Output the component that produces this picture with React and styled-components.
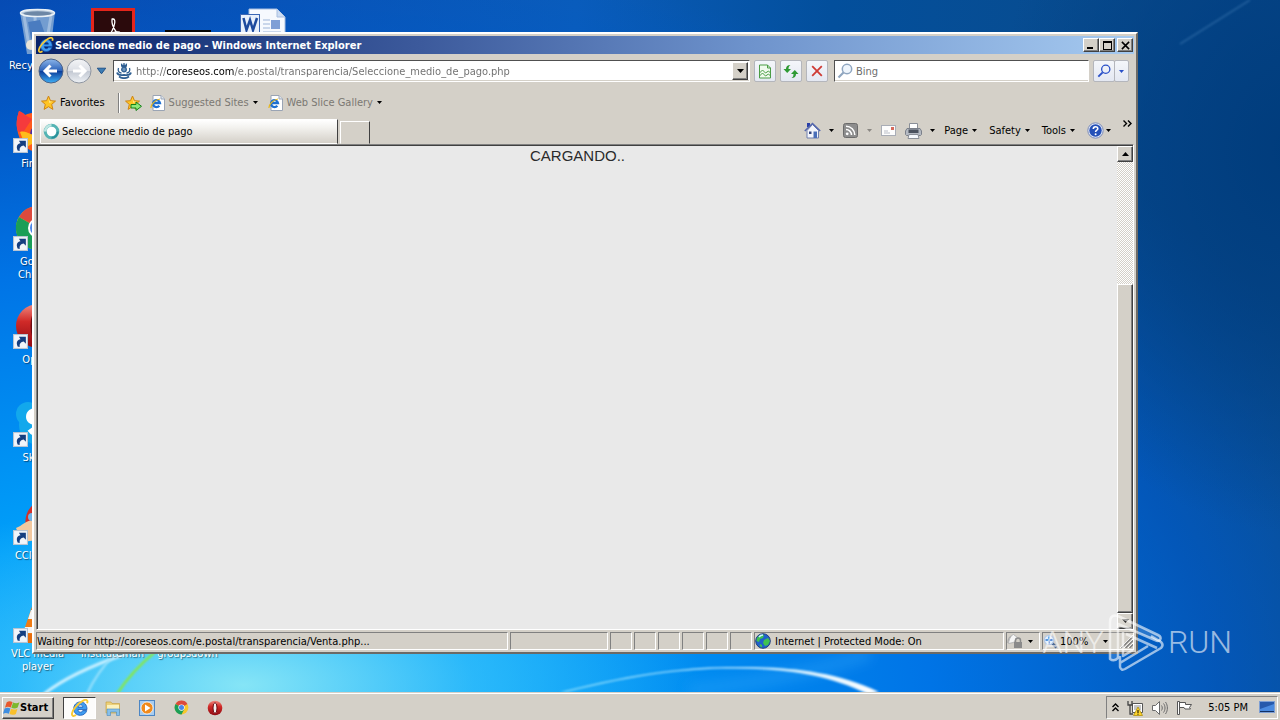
import React from 'react'
import styled, { createGlobalStyle, css } from 'styled-components'

const GlobalStyle = createGlobalStyle`
  * { box-sizing: border-box; }
  body {
    margin: 0;
    font-family: "DejaVu Sans Condensed", "DejaVu Sans", Tahoma, sans-serif;
    font-size: 11px;
    line-height: 13px;
    color: #000;
  }
  button, input {
    font: inherit;
    color: inherit;
    margin: 0;
    padding: 0;
    border: 0;
    background: none;
    border-radius: 0;
  }
  svg { display: block; flex: none; }
`

const face = '#d4d0c8'

const raised = css`
  border: 1px solid;
  border-color: #fff #404040 #404040 #fff;
  box-shadow: inset -1px -1px 0 #808080;
  background: ${face};
`

const sunken = css`
  border: 1px solid;
  border-color: #808080 #fff #fff #808080;
`

const Screen = styled.div`
  display: flex;
  flex-direction: column;
  height: 100vh;
  overflow: hidden;
`

/* ---------- desktop ---------- */

const Desktop = styled.main`
  position: relative;
  flex: 1;
  min-height: 0;
  overflow: hidden;
  background:
    radial-gradient(ellipse 460px 190px at 19% 99%, rgba(140, 232, 246, .95), rgba(70, 200, 250, .6) 50%, transparent 100%),
    radial-gradient(ellipse 300px 380px at 101% 22%, #003c7c, rgba(0, 62, 130, .7) 45%, transparent 100%),
    radial-gradient(ellipse 1300px 780px at 14% 104%, #10acff, #00a0fa 25%, #0074e6 58%, rgba(0, 92, 204, .7) 80%, transparent 100%),
    linear-gradient(90deg, #0846ac, #0a5cba 45%, #034f9c 65%, #0c4a86);
`

const Wallpaper = styled.svg`
  position: absolute;
  inset: 0;
  width: 100%;
  height: 100%;
`

const IconGrid = styled.div`
  position: relative;
  display: grid;
  grid-template-columns: repeat(4, 75px);
  grid-template-rows: repeat(7, 98px);
`

const Shortcut = styled.div`
  grid-column: ${({ $col }) => $col};
  grid-row: ${({ $row }) => $row};
  position: relative;
  display: flex;
  flex-direction: column;
  align-items: center;
  padding-top: 8px;
  gap: 3px;
  color: #fff;
  text-align: center;
  text-shadow: 1px 1px 1px rgba(0, 0, 0, .5);
`

const Label = styled.span`
  width: 66px;
`

const Arrow = styled.svg`
  position: absolute;
  left: 13px;
  top: 40px;
`

/* ---------- window ---------- */

const Window = styled.section`
  position: absolute;
  top: 32px;
  left: 32px;
  right: 142px;
  bottom: 38px;
  display: flex;
  flex-direction: column;
  padding: 2px;
  border: 2px solid;
  border-color: #fff #6c6a66 #6c6a66 #fff;
  background: ${face};
`

const TitleBar = styled.header`
  display: flex;
  align-items: center;
  height: 18px;
  flex: none;
  padding: 0 1px 0 2px;
  gap: 1px;
  color: #fff;
  font-weight: bold;
  background: linear-gradient(90deg, #0a246a, #3c5a9c 35%, #6e93cc 65%, #a6caf0);
`

const Title = styled.h1`
  flex: 1;
  margin: 0;
  font-size: 11px;
`

const WinButton = styled.button`
  ${raised}
  display: flex;
  align-items: center;
  justify-content: center;
  width: 16px;
  height: 14px;
  margin-left: ${({ $apart }) => ($apart ? 1 : -1)}px;
`

const AddressRow = styled.div`
  display: flex;
  align-items: center;
  flex: none;
  height: 34px;
  padding: 0 5px 0 2px;
  gap: 4px;
`

const NavGroup = styled.div`
  display: flex;
  align-items: center;
  gap: 2px;
`

const IconButton = styled.button`
  display: flex;
  align-items: center;
  justify-content: center;
  gap: ${({ $gap }) => $gap || 0}px;
  margin-right: ${({ $text }) => ($text ? 3 : 0)}px;
`

const Field = styled.label`
  display: flex;
  align-items: center;
  height: 22px;
  border: 1px solid;
  border-color: #505050 #fff #fff #505050;
  box-shadow: inset 0 -1px 0 ${face};
  background: #fff;
  padding: 0 1px 0 2px;
  gap: 4px;
`

const AddressField = styled(Field)`
  flex: 1;
  min-width: 0;
`

const SearchField = styled(Field)`
  width: 255px;
  margin-left: 2px;
  gap: 3px;
`

const TextInput = styled.input`
  flex: 1;
  min-width: 0;
  outline: 0;
  color: #6d6d6d;
  &::placeholder { color: #6d6d6d; opacity: 1; }
`

/* the host name is darker than the rest of the address */
const UrlInput = styled(TextInput)`
  color: transparent;
  background: linear-gradient(90deg, #6d6d6d 31px, #000 31px, #000 98px, #6d6d6d 98px);
  background-clip: text;
  -webkit-background-clip: text;
`

const DropButton = styled.button`
  ${raised}
  display: flex;
  align-items: center;
  justify-content: center;
  width: 16px;
  height: 18px;
`

const ToolButton = styled.button`
  display: flex;
  align-items: center;
  justify-content: center;
  width: 22px;
  height: 22px;
  border: 1px solid #b4b6bc;
  border-radius: 2px;
  background: linear-gradient(#f4f6fa, #e4e8f2);
`

const SearchSplit = styled.div`
  display: flex;
  button + button { width: 15px; margin-left: -1px; }
`

const FavoritesRow = styled.nav`
  display: flex;
  align-items: center;
  flex: none;
  height: 29px;
  padding-left: 5px;
`

const FavButton = styled.button`
  display: flex;
  align-items: center;
  gap: 4px;
  margin-right: ${({ $end }) => $end || 8}px;
  color: ${({ $muted }) => ($muted ? '#7b7873' : '#000')};
`

const Divider = styled.span`
  width: 2px;
  height: 20px;
  margin-right: 5px;
  border-left: 1px solid #808080;
  border-right: 1px solid #fff;
`

const TabRow = styled.div`
  display: flex;
  align-items: flex-end;
  flex: none;
  height: 27px;
  padding: 0 2px 0 4px;
`

const Tab = styled.button`
  display: flex;
  align-items: center;
  gap: 2px;
  width: 298px;
  height: 25px;
  padding-left: 2px;
  border: 1px solid;
  border-color: #fff #404040 transparent #fff;
  background: linear-gradient(#fff, #f4f3f0 30%, ${face});
`

const NewTab = styled.button`
  width: 30px;
  height: 23px;
  margin-left: 2px;
  border: 1px solid;
  border-color: #fff #404040 transparent #fff;
`

const CommandBar = styled.div`
  display: flex;
  align-items: center;
  gap: 9px;
  height: 27px;
  margin-left: auto;
`

const More = styled.button`
  align-self: flex-start;
  padding: 3px 0 0 3px;
`

const Content = styled.div`
  display: flex;
  flex: 1;
  min-height: 0;
  border: 1px solid;
  border-color: #808080 #fff #fff #808080;
`

const Page = styled.article`
  flex: 1;
  padding-top: 1px;
  border-top: 1px solid #404040;
  border-left: 1px solid #404040;
  background: #e9e9e9;
  color: #2b2b2b;
  font-family: "Liberation Sans", Arial, sans-serif;
  font-size: 15px;
  line-height: 18px;
  text-align: center;
`

const ScrollBar = styled.div`
  display: flex;
  flex-direction: column;
  width: 16px;
  border-top: 1px solid #404040;
  background: repeating-conic-gradient(#fff 0 25%, ${face} 0 50%) 0 0 / 2px 2px;
`

const ScrollButton = styled(DropButton)`
  height: 16px;
  flex: none;
`

const Track = styled.div`
  flex: 1;
  display: flex;
  flex-direction: column;
  justify-content: flex-end;
`

const Thumb = styled.div`
  ${raised}
  height: 73%;
`

const StatusBar = styled.footer`
  display: flex;
  flex: none;
  gap: 2px;
  height: 20px;
  padding-top: 2px;
`

const Panel = styled.div`
  ${sunken}
  display: flex;
  align-items: center;
  gap: ${({ $gap }) => $gap || 4}px;
  width: ${({ $w }) => ($w ? `${$w}px` : 'auto')};
  flex: ${({ $w }) => ($w ? 'none' : 1)};
  white-space: nowrap;
`

const ZoomPanel = styled(Panel)`
  > span { margin-right: auto; }
  > svg:last-child { margin-left: 10px; }
`

/* ---------- taskbar ---------- */

const TaskBar = styled.footer`
  display: flex;
  align-items: center;
  flex: none;
  height: 28px;
  padding: 2px 2px 0;
  border-top: 1px solid ${face};
  box-shadow: inset 0 1px 0 #fff;
  background: ${face};
`

const StartButton = styled.button`
  ${raised}
  display: flex;
  align-items: center;
  width: 52px;
  height: 22px;
  font-weight: bold;
`

const TaskButton = styled.button`
  display: flex;
  align-items: center;
  justify-content: center;
  width: 34px;
  height: 22px;
  ${({ $active }) => $active && css`
    width: 33px;
    border: 1px solid;
    border-color: #404040 #fff #fff #404040;
    background: #fcfcfb;
    margin: 0 0 0 9px;
  `}
`

const Tray = styled.div`
  ${sunken}
  display: flex;
  align-items: center;
  gap: 8px;
  height: 23px;
  margin-left: auto;
  padding: 0 2px 0 5px;
`

const Clock = styled.time`
  margin: 0 3px 0 8px;
`

/* ---------- watermark ---------- */

const Watermark = styled.div`
  position: absolute;
  right: 48px;
  bottom: 48px;
  display: flex;
  align-items: center;
  gap: 4px;
  color: rgba(255, 255, 255, .6);
  font-family: Roboto, sans-serif;
  font-size: 32px;
  font-weight: 300;
  line-height: 60px;
  pointer-events: none;
`

/* ---------- drawings ---------- */

const Caret = ({ color = '#000', w = 5 }) => (
  <svg width={w} height={(w + 1) / 2} viewBox="0 0 10 6" preserveAspectRatio="none">
    <path d="M0 0h10L5 6z" fill={color} />
  </svg>
)

const IeIcon = ({ size = 16 }) => (
  <svg width={size} height={size} viewBox="0 0 16 16">
    <path d="M14 10.300c-.8 2.500-2.900 4.200-5.700 4.200C4.800 14.500 2.400 12.100 2.400 8.700S4.900 2.600 8.400 2.600c3.600 0 5.900 2.600 5.800 6.800H6.200c.1 1.500 1 2.300 2.300 2.300.9 0 1.500-.4 1.900-1.400zM6.300 7.200h4.200c0-1.200-.8-2-2-2s-2 .8-2.200 2z" fill="#3f9cf0" stroke="#0f55b4" strokeWidth=".7" />
    <path d="M4.500 14.200c-2.300 1.500-4 1-3.600-1.500C1.500 9.300 6.200 3.900 10.500 1.600c2.800-1.500 5-1 3.800 2.200" fill="none" stroke="#f8ca34" strokeWidth="1.700" />
  </svg>
)

const PageIe = () => (
  <svg width="15" height="16" viewBox="0 0 15 16">
    <path d="M3 .5h8l3.500 3.500v11.500H3z" fill="#fff" stroke="#9aa4b4" />
    <path d="M11 .5V4h3.500" fill="#dfe6f0" stroke="#9aa4b4" />
    <path d="M9.300 10.800a3.500 3.500 0 1 1 .7-2.600H3.500" fill="none" stroke="#1e6fd0" strokeWidth="2.300" />
    <path d="M1 13C.5 10 5 4.500 10 4" fill="none" stroke="#e8b820" strokeWidth="1.200" />
  </svg>
)

const Star = ({ add }) => (
  <svg width={add ? 17 : 15} height="16" viewBox={add ? '0 0 17 16' : '0 0 15 16'}>
    <path d="M7.500 1l2 4.700 5 .4-3.800 3.300 1.200 5-4.400-2.700-4.400 2.700 1.200-5L.5 6.100l5-.4z" fill="#ffc524" stroke="#cf8514" />
    <path d="M7.500 3l1.200 3.400 3 .3-3.500 1z" fill="#fff0a0" />
    {add && <path d="M6 9.500h5V7l5.500 4.300L11 15.500V13H6z" fill="#8fe878" stroke="#15801b" />}
  </svg>
)

const Spinner = () => (
  <svg width="17" height="17" viewBox="0 0 17 17">
    <circle cx="8.500" cy="8.500" r="6.300" fill="#fff" stroke="#55b4b4" strokeWidth="3" />
    <path d="M2.200 8.500a6.300 6.300 0 0 1 6.300-6.300" fill="none" stroke="#bfe6e2" strokeWidth="2.500" />
    <path d="M14.800 8.500a6.300 6.300 0 0 1-6.300 6.300" fill="none" stroke="#2a8f9a" strokeWidth="2" />
  </svg>
)

const Round = ({ back }) => (
  <svg width="26" height="26" viewBox="0 0 26 26">
    <defs>
      <linearGradient id={back ? 'rb' : 'rf'} x1="0" y1="0" x2="0" y2="1">
        <stop offset="0" stopColor={back ? '#8db6ea' : '#f4f5f7'} />
        <stop offset=".48" stopColor={back ? '#2d63ba' : '#dcdfe5'} />
        <stop offset=".52" stopColor={back ? '#0c3f9c' : '#c3c9d3'} />
        <stop offset="1" stopColor={back ? '#3fb0f6' : '#eef1f5'} />
      </linearGradient>
    </defs>
    <circle cx="13" cy="13" r="12" fill={`url(#${back ? 'rb' : 'rf'})`} stroke={back ? '#4b6288' : '#8f96a1'} />
    <path
      d="M7 13h12M12.500 7.500L7 13l5.500 5.500"
      transform={back ? undefined : 'rotate(180 13 13)'}
      fill="none" stroke="#fff" strokeWidth="3"
    />
  </svg>
)

const Crest = () => (
  <svg width="16" height="16" viewBox="0 0 16 16" fill="none" stroke="#2f5f92" strokeWidth="1.300">
    <path d="M5 2.500h6M5.500.7L6 3.500h4l.5-2.800M8 0v2" />
    <circle cx="8" cy="6.500" r="2.300" fill="#6f97bd" />
    <path d="M2.500 5c-1 3 .5 5 3 5M13.500 5c1 3-.5 5-3 5" />
    <path d="M1 9.500c1 3.500 4 2.500 7 2.500s6 1 7-2.500M3 13.500c3 2 7 2 10 0" strokeWidth="1.800" />
  </svg>
)

const Magnifier = ({ color = '#8fa6c0', size = 16, fill = '#eef5fc' }) => (
  <svg width={size} height={size} viewBox="0 0 16 16">
    <circle cx="10" cy="6" r="4.700" fill={fill} stroke={color} strokeWidth="1.500" />
    <path d="M6.500 9.500L1.500 14.500" stroke={color} strokeWidth="2.200" />
  </svg>
)

const Broken = () => (
  <svg width="14" height="15" viewBox="0 0 14 15">
    <path d="M1.500 1h8l3 3v10h-11z" fill="#f0faee" stroke="#4b9d45" />
    <path d="M9.500 1v3h3M1.500 9l3-3 3 3 3-2 2 2M1.500 12l3-3 3 3 3-2 2 2" fill="none" stroke="#4b9d45" />
  </svg>
)

const Refresh = () => (
  <svg width="16" height="15" viewBox="0 0 16 15">
    <path d="M7.500 1C4.500 1 3 2.500 3 5H.5L4.200 9 8 5H5.500C5.500 3 6 2 7.500 1z" fill="#2e9a34" />
    <path d="M8.500 14c3 0 4.500-1.500 4.500-4h2.500L11.800 6 8 10h2.500c0 2-.5 3-2 4z" fill="#2e9a34" />
  </svg>
)

const Cross = ({ color, size, width }) => (
  <svg width={size} height={size} viewBox="0 0 10 10">
    <path d="M1 1l8 8M9 1l-8 8" stroke={color} strokeWidth={width} />
  </svg>
)

const House = () => (
  <svg width="17" height="17" viewBox="0 0 17 17">
    <path d="M3 1h3v4H3z" fill="#2a3fa8" />
    <path d="M3 8.500v7.500h11.500V8.500L8.500 2.500z" fill="#f3f5fb" stroke="#6f7fae" />
    <path d="M.8 9L8.500 1.500 16.200 9" fill="none" stroke="#5668ae" strokeWidth="1.600" />
    <path d="M9.500 9.500h3.500V16H9.500z" fill="#4a6eb8" />
    <path d="M5 9.500h2.500V12H5z" fill="#34457f" />
  </svg>
)

const Rss = () => (
  <svg width="15" height="15" viewBox="0 0 15 15">
    <rect x=".5" y=".5" width="14" height="14" rx="2" fill="#8d8d8d" stroke="#6c6c6c" />
    <circle cx="4.200" cy="10.800" r="1.400" fill="#fff" />
    <path d="M3 6.500a5.500 5.500 0 0 1 5.500 5.500M3 3.200A8.800 8.800 0 0 1 11.800 12" fill="none" stroke="#fff" strokeWidth="1.500" />
  </svg>
)

const Mail = () => (
  <svg width="15" height="12" viewBox="0 0 15 12">
    <rect x=".5" y=".5" width="14" height="10" fill="#fdfdfd" stroke="#a9adb6" />
    <path d="M3 8h6M3 6h4" stroke="#b9bdc6" />
    <rect x="10" y="2" width="3" height="3" fill="#d66a5c" />
  </svg>
)

const Printer = () => (
  <svg width="17" height="16" viewBox="0 0 17 16">
    <path d="M4.500.5h8V6h-8z" fill="#fff" stroke="#8a8f98" />
    <path d="M2 5.500h13l1.500 2.500v3.500l-1 1h-14l-1-1V8z" fill="#b4b9c2" stroke="#7b808a" />
    <path d="M3.500 6.500h10v3.500h-10z" fill="#4a515e" />
    <path d="M4 11.500h9l1 4H3z" fill="#f5f8fd" stroke="#8a8f98" />
  </svg>
)

const Help = () => (
  <svg width="17" height="17" viewBox="0 0 17 17">
    <circle cx="8.500" cy="8.500" r="7.700" fill="#dfe6f6" stroke="#7d8cb8" />
    <circle cx="8.500" cy="8.500" r="6.200" fill="#2450b8" />
    <path d="M6.300 7c0-3 4.500-3 4.500-.3 0 1.500-2.200 1.600-2.200 3.300" fill="none" stroke="#fff" strokeWidth="1.600" />
    <circle cx="8.600" cy="12.300" r="1" fill="#fff" />
  </svg>
)

const Globe = () => (
  <svg width="16" height="16" viewBox="0 0 16 16">
    <circle cx="8" cy="8" r="7.300" fill="#1f62cc" stroke="#23407c" />
    <path d="M2 5c2-3 5-4 7-3L8 5 5 6 4 9 1.500 8zM9 7l4-2 2 3-2 4-3 1-2-3zM5 11l2 1v2.500L4.500 13z" fill="#3fc250" />
    <path d="M4 4c1-1.500 3-2 4-2" stroke="#c9f2ff" fill="none" strokeWidth="1.500" />
  </svg>
)

const LockShield = () => (
  <svg width="16" height="16" viewBox="0 0 16 16">
    <path d="M1 10c0-4 2-7 5-7l4 2" fill="none" stroke="#a9a9a9" strokeWidth="1.500" />
    <path d="M1.500 10.500C2 5 5 1.500 6.500 1.500l4 3-4 5z" fill="#f5f5f5" stroke="#b4b4b4" />
    <path d="M8.500 9V7.500a2.500 2.500 0 0 1 5 0V9" fill="none" stroke="#8b8b8b" strokeWidth="1.500" />
    <rect x="7" y="9" width="8" height="6" fill="#8b8b8b" />
  </svg>
)

const ZoomIcon = () => (
  <svg width="15" height="15" viewBox="0 0 15 15">
    <path d="M8.500 8.500l5 5" stroke="#4e6a94" strokeWidth="2.500" />
    <circle cx="6" cy="6" r="4.700" fill="#e4f0fd" stroke="#b4c8e4" strokeWidth="1.200" />
    <path d="M2.500 6h7M6 2.500v7" stroke="#5a94dc" strokeWidth="1.800" />
  </svg>
)

const Grip = () => (
  <svg width="13" height="13" viewBox="0 0 13 13" fill="none">
    <path d="M0 13L13 0M4 13l9-9M8 13l5-5" stroke="#fff" />
    <path d="M1.500 13L13 1.500M5.500 13L13 5.500M9.500 13L13 9.500" stroke="#808080" strokeWidth="1.500" />
  </svg>
)

const Flag = () => (
  <svg width="17" height="18" viewBox="0 0 16 16">
    <path d="M3.500 2.500c2-1.500 4-1 5.500 0L7.300 7.500C5.500 6.500 3.500 6.500 1.800 7.700z" fill="#e8582c" />
    <path d="M9.500 2.800c2 1 4 1 6-.3L13.800 7.500c-2 1.300-4 1.200-6 .2z" fill="#7db82c" />
    <path d="M1.500 8.500c2-1.200 3.800-1 5.500 0l-1.500 5c-2-1-3.700-1-5.500 0z" fill="#3f8ee0" />
    <path d="M7.600 8.800c2 1 4 1 6-.2l-1.500 5c-2 1.200-4 1-6 .1z" fill="#f8c02c" />
  </svg>
)

const Folder = () => (
  <svg width="16" height="16" viewBox="0 0 16 16">
    <path d="M1 2h5l1 1.500h7.500V13H1z" fill="#ecd07a" stroke="#c49b34" strokeWidth=".6" />
    <path d="M2 5h12v5H2z" fill="#fbf1bc" />
    <path d="M2 15.500V9h12.500v6.500h-3v-3.500h-6v3.500z" fill="#86c0ea" stroke="#4a88bc" strokeWidth=".6" />
  </svg>
)

const MediaPlayer = () => (
  <svg width="16" height="16" viewBox="0 0 16 16">
    <rect x=".5" y=".5" width="15" height="15" fill="#a8cdf0" stroke="#4c86c4" />
    <circle cx="8" cy="8" r="6" fill="#f08a1c" stroke="#fff" strokeWidth=".7" />
    <path d="M6 4.500v7L11.500 8z" fill="#fff" />
  </svg>
)

const ChromeIcon = ({ size }) => (
  <svg width={size} height={size} viewBox="0 0 48 48">
    <circle cx="24" cy="24" r="22" fill="#f7c72c" />
    <path d="M24 24L4.900 13A22 22 0 0 1 43.100 13z" fill="#dc4a3d" />
    <path d="M24 24L4.900 13A22 22 0 0 0 24 46l9-17z" fill="#1a9e57" />
    <circle cx="24" cy="24" r="10" fill="#fff" />
    <circle cx="24" cy="24" r="8" fill="#4a86e8" />
  </svg>
)

const OperaIcon = ({ size }) => (
  <svg width={size} height={size} viewBox="0 0 48 48">
    <defs>
      <linearGradient id="opera" x1="0" y1="0" x2="0" y2="1">
        <stop offset="0" stopColor="#f08a80" />
        <stop offset=".4" stopColor="#d02a28" />
        <stop offset="1" stopColor="#8e0a12" />
      </linearGradient>
    </defs>
    <circle cx="24" cy="24" r="22" fill="url(#opera)" />
    <ellipse cx="24" cy="24" rx="6" ry="16" fill="#f4f0f0" stroke="#6c0a10" strokeWidth="3" />
  </svg>
)

const NetworkIcon = () => (
  <svg width="16" height="16" viewBox="0 0 16 16">
    <path d="M5.500 3.500h10v9h-10z" fill="#fff" stroke="#555" />
    <path d="M7 5h7v5H7z" fill="#c5c5c5" />
    <path d="M1 1v4h4V1M3 5v9h3" fill="none" stroke="#444" strokeWidth="1.300" />
    <path d="M11 7l4.500 8.500h-9z" fill="#ffd42a" stroke="#a88800" strokeWidth=".7" />
    <path d="M11 10v3M11 13.700v1" stroke="#000" />
  </svg>
)

const Speaker = () => (
  <svg width="17" height="16" viewBox="0 0 17 16" fill="none" stroke="#6a6a6a">
    <path d="M1.500 5.500h3l4-4v13l-4-4h-3z" fill="#fff" />
    <path d="M10.500 5.500c1 1.500 1 3.500 0 5M12.500 3.500c2 2.500 2 6.500 0 9M14.500 2c2.500 3.500 2.500 8.500 0 12" />
  </svg>
)

const ActionFlag = () => (
  <svg width="16" height="16" viewBox="0 0 16 16" fill="#fff" stroke="#555">
    <path d="M3.500 2.500h6v2h6l-2 3 1 1.500H9l-1-1.500H3.500z" />
    <path d="M1.500 1.500h2v13h-2z" />
  </svg>
)

const Display = () => (
  <svg width="16" height="13" viewBox="0 0 16 13">
    <rect x=".5" y=".5" width="15" height="11" fill="#2659ac" stroke="#7e9fd4" />
    <path d="M1 8L15 3v8H1z" fill="#4a8ae0" />
    <path d="M1 10.500h14" stroke="#123064" />
  </svg>
)

const RecycleBin = () => (
  <svg width="48" height="48" viewBox="0 0 48 48">
    <path d="M6 4h35l-5 42H13z" fill="#8fb0d6" fillOpacity=".8" />
    <path d="M10 8l5 30M37 8l-5 30M21 8l1 30" stroke="#dfeaf5" strokeOpacity=".4" strokeWidth="3" />
    <path d="M14 14l12-2 5 14-14 5z" fill="#4a7cc0" />
    <ellipse cx="23.500" cy="5" rx="17" ry="3.500" fill="#b7c8da" stroke="#e9f0f6" strokeWidth="1.500" />
    <ellipse cx="23.500" cy="5.500" rx="14" ry="2.200" fill="#6d87a6" />
    <circle cx="17" cy="37" r="5" fill="#e8e4d8" />
  </svg>
)

const Acrobat = () => (
  <svg width="48" height="48" viewBox="0 0 48 48">
    <rect x="3.500" y="1.500" width="41" height="45" fill="#2b0a0c" stroke="#e5251b" strokeWidth="3" />
    <path d="M24 11c3 0 2 6-1 12-2 4-6 8-7 6s6-4 11-5 6 3 3 2-7-8-7-12 0-3 1-3z" fill="none" stroke="#fff" strokeWidth="1.300" />
  </svg>
)

const BlackFile = () => (
  <svg width="48" height="48" viewBox="0 0 48 48">
    <rect x="1" y="22" width="46" height="26" fill="#050505" />
  </svg>
)

const WordDoc = () => (
  <svg width="48" height="48" viewBox="0 0 48 48">
    <path d="M10 1h28l8 8v39H10z" fill="#f6f9fe" stroke="#a8bedf" />
    <path d="M38 1v8h8" fill="#cddcf2" stroke="#a8bedf" />
    <path d="M24 12h7M24 16h7M24 20h7M24 24h18" stroke="#9db4d8" />
    <rect x="32" y="12" width="9" height="9" fill="#7f9fd6" />
    <rect x="1.500" y="6.500" width="19" height="20" fill="#e7effb" stroke="#3a66b4" />
    <path d="M4.500 10l3 12 3.500-10 3 10 4-12" fill="none" stroke="#1d4a9e" strokeWidth="2.500" />
  </svg>
)

const Firefox = () => (
  <svg width="48" height="48" viewBox="0 0 48 48">
    <path d="M3 22C2 14 4 9 5 5c3 1 5 3 6 4 5-2 12-4 21-1 8 3 13 10 12 19-1 11-9 19-20 19S5 37 3 22z" fill="#ff5a1c" />
    <path d="M3 22C2 14 4 9 5 5c3 1 5 3 6 4l7 4-8 12c-4 2-7 1-7-3z" fill="#f53a3c" />
    <circle cx="26" cy="28" r="10" fill="#4a2c9c" />
    <path d="M6 26c6-2 12 4 18 4-2 8-8 8-12 12z" fill="#ffbc1c" />
  </svg>
)

const Skype = () => (
  <svg width="48" height="48" viewBox="0 0 48 48">
    <circle cx="25" cy="25" r="20" fill="#12a8ec" />
    <circle cx="14" cy="14" r="12" fill="#12a8ec" />
    <path d="M33 14c-5-5-18-5-18 3s19 5 19 12-13 7-18 0" fill="none" stroke="#fff" strokeWidth="6" />
  </svg>
)

const CCleaner = () => (
  <svg width="48" height="48" viewBox="0 0 48 48">
    <path d="M42 12A15 17 0 1 0 42 36" fill="none" stroke="#d4302a" strokeWidth="10" />
    <path d="M2 30c6-2 10-8 18-8l4 20-16 2z" fill="#f3c9a0" />
    <circle cx="18" cy="19" r="4" fill="#6fb4e8" />
  </svg>
)

const Vlc = () => (
  <svg width="48" height="48" viewBox="0 0 48 48">
    <path d="M21 2h6l13 38H8z" fill="#f07c14" />
    <path d="M17 14h14l3 9H14zM11 31h26l2 6H9z" fill="#f4f4f4" />
    <path d="M10 38h28l6 9H4z" fill="#e66c0c" />
  </svg>
)

const ShortcutArrow = () => (
  <Arrow width="15" height="15" viewBox="0 0 14 14">
    <rect x=".5" y=".5" width="13" height="13" fill="#f1f5fa" stroke="#b8c4d2" />
    <path d="M4.500 12C2.500 8 4 5.500 7 5L5.500 2.500H12V9L10 7C7.500 7.500 5.500 9 6.500 12z" fill="#153e80" />
  </Arrow>
)

const Backdrop = () => (
  <Wallpaper viewBox="0 0 1280 692" preserveAspectRatio="none" aria-hidden="true">
    <defs>
      <filter id="soft"><feGaussianBlur stdDeviation=".8" /></filter>
      <filter id="haze"><feGaussianBlur stdDeviation="7" /></filter>
      <linearGradient id="arc" x1="560" x2="880" y1="0" y2="0" gradientUnits="userSpaceOnUse">
        <stop offset="0" stopColor="#7fd8fc" />
        <stop offset=".6" stopColor="#bfe8ff" />
        <stop offset="1" stopColor="#fff" />
      </linearGradient>
    </defs>
    <path d="M690 690q100-10 180-36" stroke="#3eaefc" strokeWidth="8" opacity=".5" fill="none" filter="url(#haze)" />
    <path d="M560 692C640 672 690 667 735 667s96 2 144 25l-11 2c-45-22-90-25-133-25.500s-95 5-168 23.500z" fill="url(#arc)" filter="url(#soft)" />
    <path d="M44 694q28-22 82-40" stroke="#c8f0ff" strokeWidth="3" fill="none" filter="url(#soft)" />
    <path d="M87 694q10-22 28-40" stroke="#9ce2fc" strokeWidth="2" fill="none" filter="url(#soft)" />
    <path d="M117 694q14-22 38-42" stroke="#86e84c" strokeWidth="2.500" fill="none" filter="url(#soft)" />
    <path d="M1180 44L1250 0" stroke="#4d87bd" strokeWidth="2" opacity=".4" filter="url(#soft)" />
  </Wallpaper>
)

const shortcuts = [
  { label: 'Recycle Bin', icon: <RecycleBin />, col: 1, row: 1, plain: true },
  { label: 'Firefox', icon: <Firefox />, col: 1, row: 2 },
  { label: 'Google Chrome', icon: <ChromeIcon size={48} />, col: 1, row: 3 },
  { label: 'Opera', icon: <OperaIcon size={48} />, col: 1, row: 4 },
  { label: 'Skype', icon: <Skype />, col: 1, row: 5 },
  { label: 'CCleaner', icon: <CCleaner />, col: 1, row: 6 },
  { label: 'VLC media player', icon: <Vlc />, col: 1, row: 7 },
  { label: '', icon: <Acrobat />, col: 2, row: 1, plain: true },
  { label: '', icon: <BlackFile />, col: 3, row: 1, plain: true },
  { label: '', icon: <WordDoc />, col: 4, row: 1, plain: true },
  { label: 'instituteman', icon: <WordDoc />, col: 2, row: 7, plain: true },
  { label: 'groupsdown', icon: <WordDoc />, col: 3, row: 7, plain: true },
]

const commands = [
  { name: 'Home', icon: <House />, gap: 8 },
  { name: 'Feeds', icon: <Rss />, gap: 9, muted: true },
  { name: 'Read mail', icon: <Mail />, single: true },
  { name: 'Print', icon: <Printer />, gap: 8 },
  { name: 'Page', gap: 4 },
  { name: 'Safety', gap: 4 },
  { name: 'Tools', gap: 4 },
  { name: 'Help', icon: <Help />, gap: 2 },
]

const Toolbar = () => (
  <>
    <AddressRow>
      <NavGroup>
        <IconButton aria-label="Back"><Round back /></IconButton>
        <IconButton aria-label="Forward"><Round /></IconButton>
        <IconButton aria-label="Recent pages">
          <svg width="15" height="8" viewBox="0 0 16 8">
            <path d="M3.500 1h9L8 7z" fill="#3c7cb4" stroke="#1d4f86" />
          </svg>
        </IconButton>
      </NavGroup>
      <AddressField>
        <Crest />
        <UrlInput
          aria-label="Address"
          defaultValue="http://coreseos.com/e.postal/transparencia/Seleccione_medio_de_pago.php"
        />
        <DropButton aria-label="Show addresses"><Caret w={7} /></DropButton>
      </AddressField>
      <ToolButton aria-label="Compatibility view"><Broken /></ToolButton>
      <ToolButton aria-label="Refresh"><Refresh /></ToolButton>
      <ToolButton aria-label="Stop"><Cross color="#cf3a34" size={12} width={1.5} /></ToolButton>
      <SearchField>
        <Magnifier />
        <TextInput aria-label="Search" placeholder="Bing" />
      </SearchField>
      <SearchSplit>
        <ToolButton aria-label="Search"><Magnifier color="#2a50c8" size={14} fill="none" /></ToolButton>
        <ToolButton aria-label="Search options"><Caret color="#2a50c8" /></ToolButton>
      </SearchSplit>
    </AddressRow>
    <FavoritesRow>
      <FavButton $end={13}><Star />Favorites</FavButton>
      <Divider />
      <FavButton aria-label="Add to favorites"><Star add /></FavButton>
      <FavButton $muted $end={10}><PageIe />Suggested Sites <Caret /></FavButton>
      <FavButton $muted><PageIe />Web Slice Gallery <Caret /></FavButton>
    </FavoritesRow>
    <TabRow>
      <Tab><Spinner />Seleccione medio de pago</Tab>
      <NewTab aria-label="New tab" />
      <CommandBar>
        {commands.map((c) => (
          <IconButton key={c.name} aria-label={c.name} $gap={c.gap} $text={!c.icon}>
            {c.icon || c.name}
            {!c.single && <Caret color={c.muted ? '#8a8782' : '#000'} />}
          </IconButton>
        ))}
        <More aria-label="More commands">
          <svg width="9" height="7" viewBox="0 0 9 7" fill="none" stroke="#000" strokeWidth="1.400">
            <path d="M.5.5l3 3-3 3M5 .5l3 3-3 3" />
          </svg>
        </More>
      </CommandBar>
    </TabRow>
  </>
)

const Browser = () => (
  <Window>
    <TitleBar>
      <IeIcon />
      <Title>Seleccione medio de pago - Windows Internet Explorer</Title>
      <WinButton aria-label="Minimize">
        <svg width="8" height="8" viewBox="0 0 8 8"><path d="M0 6h6v2H0z" /></svg>
      </WinButton>
      <WinButton aria-label="Maximize">
        <svg width="9" height="9" viewBox="0 0 9 9"><path d="M0 0h9v9H0zM1 2v6h7V2z" fillRule="evenodd" /></svg>
      </WinButton>
      <WinButton aria-label="Close" $apart><Cross color="#000" size={9} width={1.7} /></WinButton>
    </TitleBar>
    <Toolbar />
    <Content>
      <Page>CARGANDO..</Page>
      <ScrollBar>
        <ScrollButton aria-label="Scroll up">
          <svg width="7" height="4" viewBox="0 0 7 4"><path d="M3.500 0L7 4H0z" /></svg>
        </ScrollButton>
        <Track><Thumb /></Track>
        <ScrollButton aria-label="Scroll down"><Caret w={7} /></ScrollButton>
      </ScrollBar>
    </Content>
    <StatusBar>
      <Panel>Waiting for http://coreseos.com/e.postal/transparencia/Venta.php...</Panel>
      <Panel $w={98} />
      {[1, 2, 3, 4, 5, 6].map((n) => <Panel key={n} $w={22} />)}
      <Panel $w={250}><Globe />Internet | Protected Mode: On</Panel>
      <Panel $w={34} $gap={5}><LockShield /><Caret /></Panel>
      <ZoomPanel $w={92} $gap={2}>
        <ZoomIcon />
        <span>100%</span>
        <Caret />
        <Grip />
      </ZoomPanel>
    </StatusBar>
  </Window>
)

export default function App() {
  return (
    <Screen>
      <GlobalStyle />
      <Desktop>
        <Backdrop />
        <IconGrid>
          {shortcuts.map((s) => (
            <Shortcut key={`${s.col}-${s.row}`} $col={s.col} $row={s.row}>
              {s.icon}
              <Label>{s.label}</Label>
              {!s.plain && <ShortcutArrow />}
            </Shortcut>
          ))}
        </IconGrid>
        <Browser />
      </Desktop>
      <TaskBar>
        <StartButton><Flag />Start</StartButton>
        <TaskButton aria-label="Internet Explorer" $active><IeIcon size={18} /></TaskButton>
        <TaskButton aria-label="Explorer"><Folder /></TaskButton>
        <TaskButton aria-label="Media Player"><MediaPlayer /></TaskButton>
        <TaskButton aria-label="Chrome"><ChromeIcon size={15} /></TaskButton>
        <TaskButton aria-label="Opera"><OperaIcon size={16} /></TaskButton>
        <Tray>
          <svg width="7" height="9" viewBox="0 0 7 9" fill="none" stroke="#000" strokeWidth="1.400">
            <path d="M.5 4l3-3 3 3M.5 8l3-3 3 3" />
          </svg>
          <NetworkIcon />
          <Speaker />
          <ActionFlag />
          <Clock>5:05 PM</Clock>
          <Display />
        </Tray>
      </TaskBar>
      <Watermark>
        <span>ANY</span>
        <svg width="56" height="60" viewBox="0 0 56 60" fill="#fff" fillOpacity=".15" stroke="#fff" strokeOpacity=".6" strokeWidth="2.500" strokeLinejoin="round">
          <path d="M2 47V10q0-8 8-6l40 19q4 2 2 5-2 2-5 0L10 12v34q-4 4-8 1z" />
          <path d="M18 22l31 14M15 20v24l10-6" fill="none" />
          <path d="M43 24l10 6q3 3 0 6L17 57q-4 2-5-2v-4l28-17M12 51v-7" fill="none" />
        </svg>
        <span>RUN</span>
      </Watermark>
    </Screen>
  )
}
